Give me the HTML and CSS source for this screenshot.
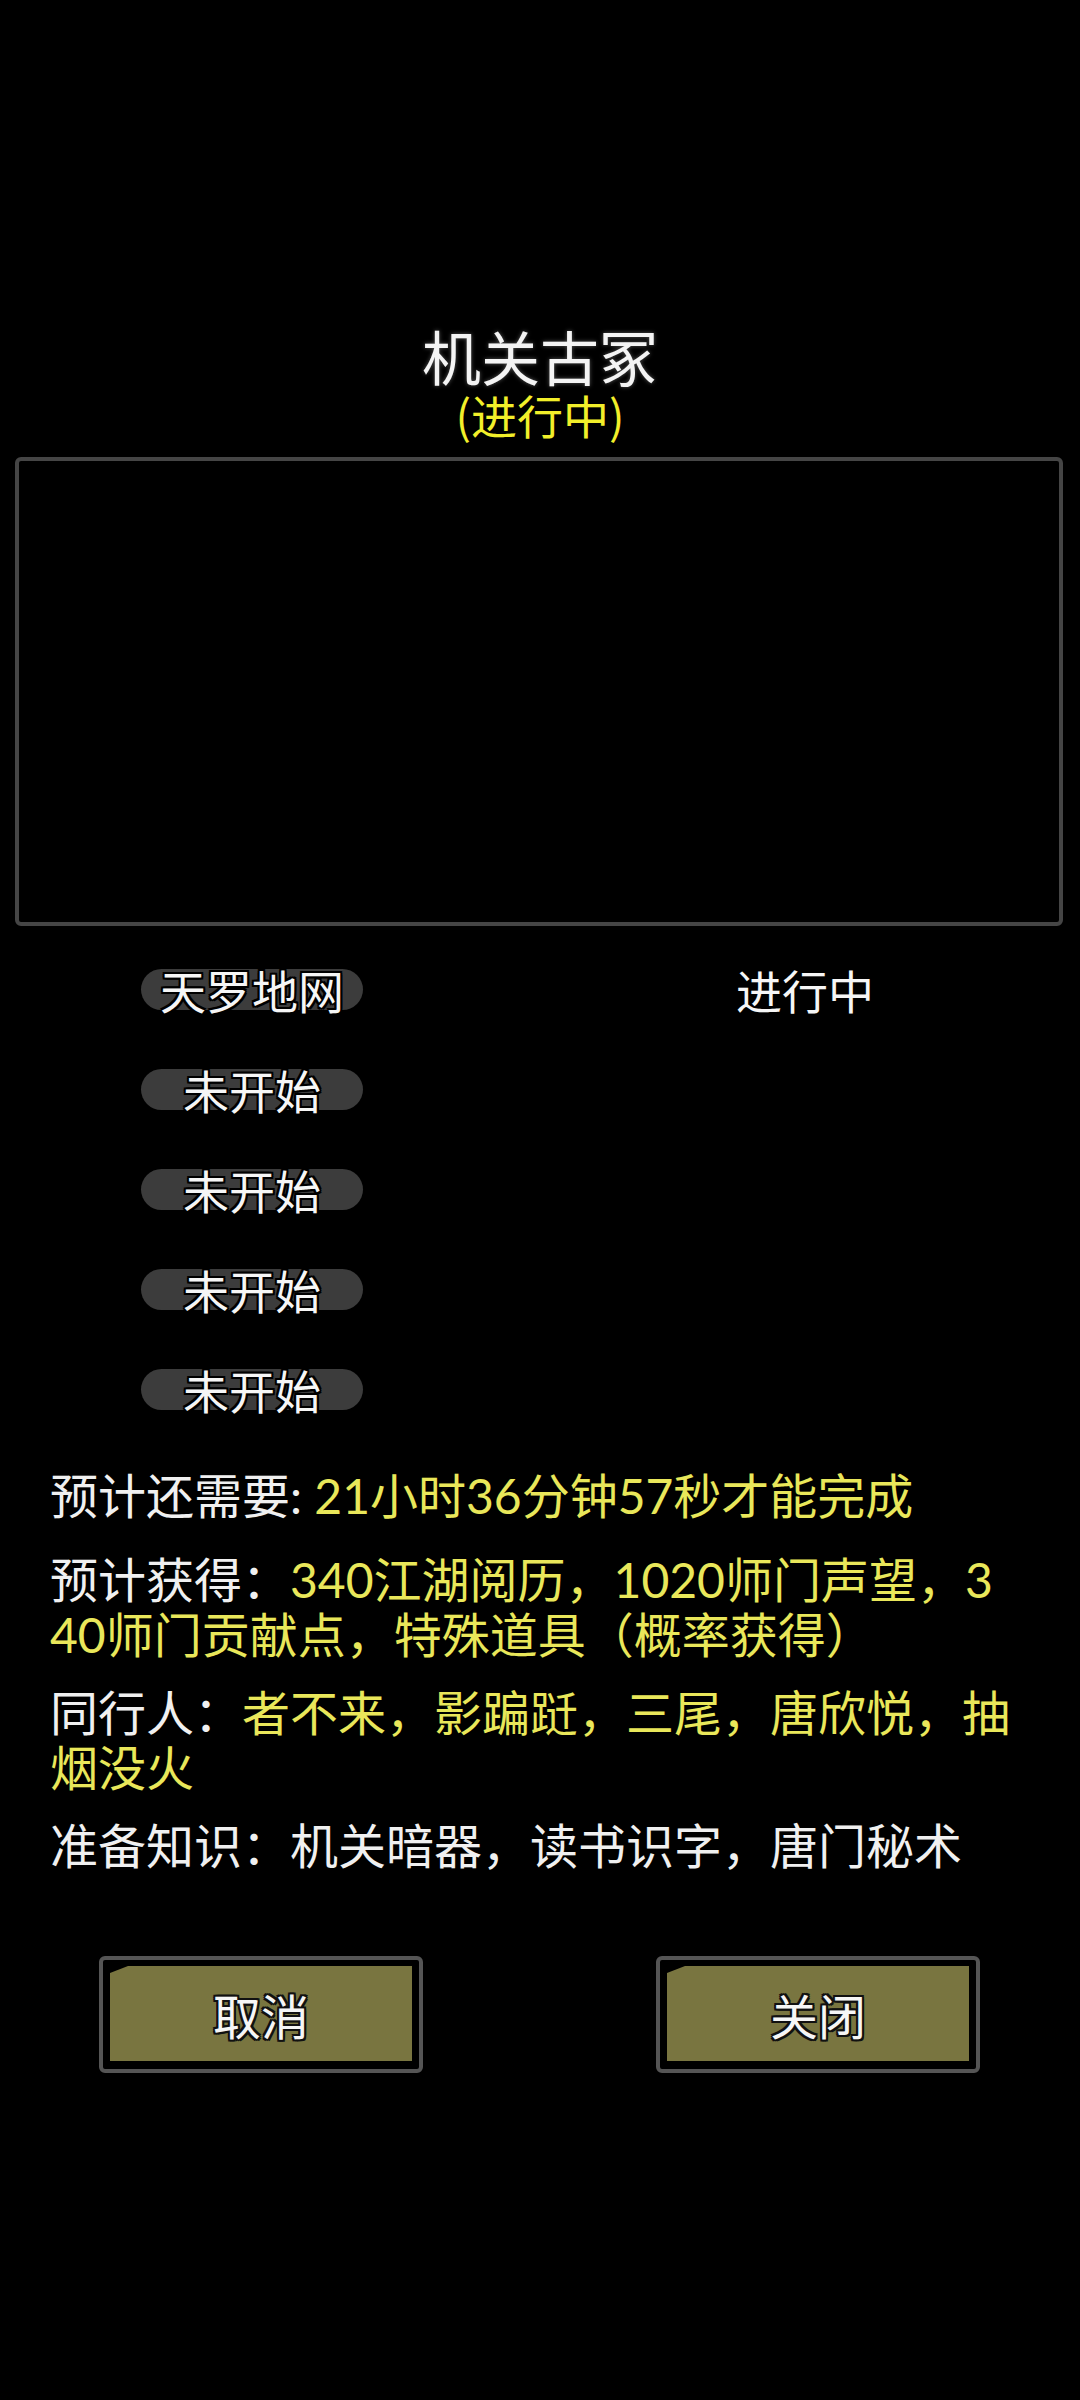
FILE: index.html
```html
<!DOCTYPE html>
<html lang="zh-CN">
<head>
<meta charset="utf-8">
<title>机关古冢</title>
<link rel="stylesheet" href="styles.css">
</head>
<body>
<div class="page">
  <header class="head">
    <div class="title">机关古冢</div>
    <div class="status">(进行中)</div>
  </header>

  <div class="stage"></div>

  <div class="steps">
    <div class="pill"><span>天罗地网</span></div>
    <div class="state">进行中</div>
    <div class="pill"><span>未开始</span></div>
    <div class="state"></div>
    <div class="pill"><span>未开始</span></div>
    <div class="state"></div>
    <div class="pill"><span>未开始</span></div>
    <div class="state"></div>
    <div class="pill"><span>未开始</span></div>
    <div class="state"></div>
  </div>

  <div class="info">
    <p class="line first"><span class="label">预计还需要: </span><span class="value">21小时36分钟57秒才能完成</span></p>
    <p class="line"><span class="label">预计获得：</span><span class="value">340江湖阅历，1020师门声望，340师门贡献点，特殊道具（概率获得）</span></p>
    <p class="line"><span class="label">同行人：</span><span class="value">者不来，影蹁跹，三尾，唐欣悦，抽烟没火</span></p>
    <p class="line"><span class="label">准备知识：机关暗器，读书识字，唐门秘术</span></p>
  </div>

  <div class="actions">
    <div class="btn"><div class="btn-fill">取消</div></div>
    <div class="btn"><div class="btn-fill">关闭</div></div>
  </div>
</div>
</body>
</html>
```

FILE: styles.css
```css
html, body {
  margin: 0;
  padding: 0;
  background: #000;
}

body {
  width: 1080px;
  height: 2400px;
  overflow: hidden;
  font-family: "Noto Sans CJK SC", "Noto Sans", sans-serif;
  color: #f2f2f2;
}

.page {
  display: flex;
  flex-direction: column;
  padding-top: 324px;
}

.head {
  display: flex;
  flex-direction: column;
  align-items: center;
}

.title {
  font-size: 59px;
  line-height: 64px;
  color: #f4f4f4;
  text-shadow: 0 0 4px rgba(255, 255, 255, 0.35);
}

.status {
  font-size: 46px;
  line-height: 52px;
  color: #f2ef2a;
}

.stage {
  margin: 17px 0 0 15px;
  width: 1048px;
  height: 469px;
  box-sizing: border-box;
  border: 4px solid #454545;
  border-radius: 6px;
}

.steps {
  margin-top: 43px;
  padding-left: 141px;
  display: grid;
  grid-template-columns: 222px auto;
  column-gap: 373px;
  row-gap: 59px;
  justify-content: start;
}

.pill {
  height: 41px;
  border-radius: 21px;
  background: #3c3c3c;
  display: flex;
  align-items: center;
  justify-content: center;
}

.pill span,
.state {
  font-size: 46px;
  line-height: 41px;
  color: #f6f6f6;
  white-space: nowrap;
}

.pill span {
  text-shadow: -2px 0 #000, 2px 0 #000, 0 -2px #000, 0 2px #000,
    -2px -2px #000, 2px 2px #000, -2px 2px #000, 2px -2px #000;
}

.state {
  height: 41px;
}

.info {
  margin-top: 58px;
  padding-left: 50px;
  width: 964px;
  display: flex;
  flex-direction: column;
  gap: 23px;
}

.line {
  margin: 0;
  font-family: "Lato", "Noto Sans CJK SC", sans-serif;
  font-size: 48px;
  line-height: 55px;
  word-break: break-all;
  text-shadow: 0 0 3px #000;
}

.line.first {
  margin-bottom: 6px;
}

.label {
  color: #f0f0f0;
}

.value {
  color: #e9e75a;
}

.actions {
  margin-top: 83px;
  padding-left: 99px;
  display: flex;
  gap: 233px;
}

.btn {
  width: 324px;
  height: 117px;
  box-sizing: border-box;
  border: 4px solid #555;
  border-radius: 6px;
  background: #000;
  padding: 6px 7px 8px 7px;
}

.btn-fill {
  height: 100%;
  background: #797540;
  clip-path: polygon(0 7px, 18px 0, 100% 0, 100% 100%, 0 100%);
  display: flex;
  align-items: center;
  justify-content: center;
  font-size: 48px;
  color: #f6f6f6;
  text-shadow: -2px 0 #111, 2px 0 #111, 0 -2px #111, 0 2px #111,
    -2px -2px #111, 2px 2px #111, -2px 2px #111, 2px -2px #111;
}
```
